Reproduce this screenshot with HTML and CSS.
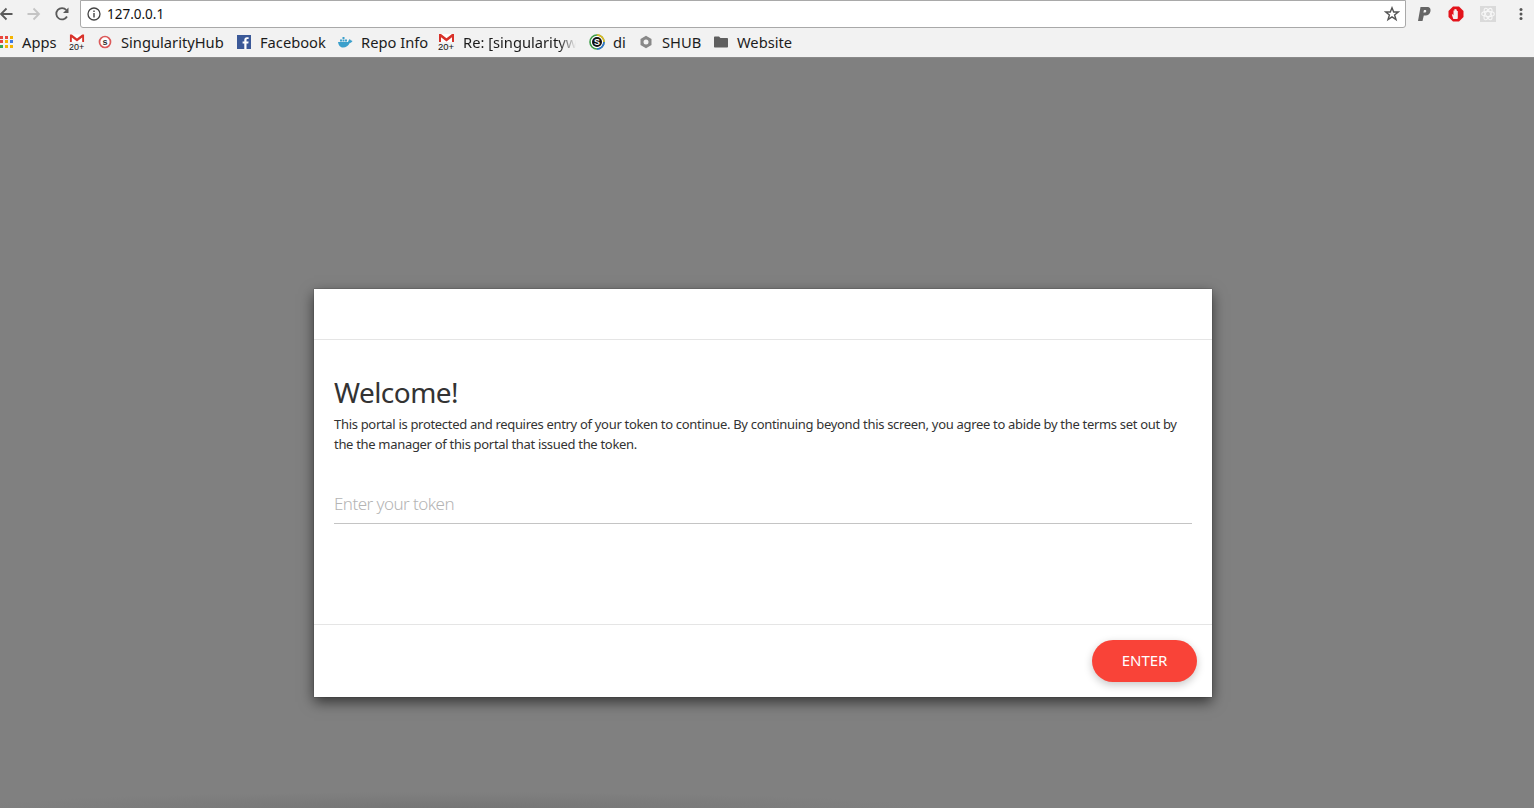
FILE: index.html
```html
<!DOCTYPE html>
<html>
<head>
<meta charset="utf-8">
<title>Welcome</title>
<link rel="stylesheet" href="styles.css">
</head>
<body>

<div class="toolbar">
    <svg class="nav-icon" width="14" height="14" viewBox="0 0 14 14"><path d="M13.500 7H2M7.500 1.500 2 7l5.500 5.500" fill="none" stroke="#5a5a5a" stroke-width="1.800"/></svg>
    <svg class="nav-icon fwd" width="14" height="14" viewBox="0 0 14 14"><path d="M.5 7H12M6.500 1.500 12 7l-5.500 5.500" fill="none" stroke="#c4c4c4" stroke-width="1.800"/></svg>
    <svg class="nav-icon reload" width="16" height="16" viewBox="0 0 16 16"><path d="M13 10.500A5.700 5.700 0 1 1 12.300 4" fill="none" stroke="#5a5a5a" stroke-width="1.800"/><path d="M14.500 1.500v5.500H9z" fill="#5a5a5a"/></svg>
    <div class="omnibox">
        <svg width="14" height="14" viewBox="0 0 14 14"><circle cx="7" cy="7" r="6" fill="none" stroke="#444" stroke-width="1.300"/><path d="M7 6v4.500M7 3.500v1.400" stroke="#444" stroke-width="1.400"/></svg>
        <span class="url">127.0.0.1</span>
        <svg class="star" width="16" height="16" viewBox="0 0 16 16"><path d="M8 1.800 9.700 6H14.300L10.600 8.900 12 13.600 8 10.900 4 13.600 5.400 8.900 1.700 6H6.300Z" fill="none" stroke="#555" stroke-width="1.400"/></svg>
    </div>
    <div class="extensions">
        <svg class="paypal" width="14" height="16" viewBox="0 0 14 16"><path d="M3.500 1H10c3 0 4 2 3.400 4.500C12.800 8 11 9.500 8.500 9.500H6.800L5.500 15H1z" fill="#666"/><path d="M7 4 6.400 6.500H8c1.400 0 1.800-2.500.3-2.500z" fill="#f2f2f2"/></svg>
        <svg width="16" height="16" viewBox="0 0 16 16"><path d="M5 .5h6L15.500 5v6L11 15.500H5L.5 11V5z" fill="#e3131b"/><path d="M5.300 13 3.800 8.500l1 -.3.7 1.300V4.500h1v3V3h1.200v4.500V3.500h1.100v4V5h1v6.500L9.500 13z" fill="#f5eeee"/></svg>
        <svg width="16" height="16" viewBox="0 0 16 16"><rect width="16" height="16" fill="#dadada"/><g fill="none" stroke="#f7f7f7" stroke-width="1.100"><ellipse cx="8" cy="8" rx="6.300" ry="2.600"/><ellipse cx="8" cy="8" rx="6.300" ry="2.600" transform="rotate(60 8 8)"/><ellipse cx="8" cy="8" rx="6.300" ry="2.600" transform="rotate(120 8 8)"/></g></svg>
        <svg class="menu" width="4" height="14" viewBox="0 0 4 14"><circle cx="2" cy="2.500" r="1.500" fill="#555"/><circle cx="2" cy="7" r="1.500" fill="#555"/><circle cx="2" cy="11.500" r="1.500" fill="#555"/></svg>
    </div>
</div>

<div class="bookmarks">
    <a class="mark">
        <span class="ico narrow">
            <svg width="13" height="13" viewBox="0 0 13 13">
                <rect x="0" y="1" width="3" height="3" fill="#e8453c"/><rect x="5" y="1" width="3" height="3" fill="#e8453c"/><rect x="10" y="1" width="3" height="3" fill="#f4b400"/>
                <rect x="0" y="5" width="3" height="3" fill="#e8453c"/><rect x="5" y="5" width="3" height="3" fill="#f4b400"/><rect x="10" y="5" width="3" height="3" fill="#3b78e7"/>
                <rect x="0" y="10" width="3" height="3" fill="#34a853"/><rect x="5" y="10" width="3" height="3" fill="#f4b400"/><rect x="10" y="10" width="3" height="3" fill="#f4b400"/>
            </svg>
        </span>
        Apps
    </a>
    <a class="mark">
        <span class="ico">
            <svg width="17" height="18" viewBox="0 0 17 18"><path d="M1 9V1h15v8z" fill="#fff"/><path d="M1 9V1h2l5.500 4.300L14 1h2v8h-2V4.300L8.500 8.500 3 4.300V9z" fill="#d8322a"/><text x="0" y="17" class="count">20+</text></svg>
        </span>
    </a>
    <a class="mark">
        <span class="ico">
            <svg width="14" height="14" viewBox="0 0 14 14"><circle cx="7" cy="7" r="5.500" fill="#fff" stroke="#dc5a5a" stroke-width="1.700"/><text x="7" y="9.700" class="letter dark">s</text></svg>
        </span>
        SingularityHub
    </a>
    <a class="mark">
        <span class="ico">
            <svg width="14" height="14" viewBox="0 0 14 14"><rect width="14" height="14" fill="#3b5998"/><path d="M9.500 14V8.500h1.800l.3-2.100H9.500V5c0-.7.200-1 1-1h1.100V2.200H10C8.200 2.200 7.300 3.300 7.300 5v1.400H5.600v2.100h1.700V14z" fill="#fff"/></svg>
        </span>
        Facebook
    </a>
    <a class="mark">
        <span class="ico wide">
            <svg width="16" height="12" viewBox="0 0 16 12"><path d="M1 6h10c.5-1.500 1-2.500 2-3 .3 1 .8 1.500 2.500 2-1 1.500-2 2-3 2.300C11.500 10 9 11.500 6 11.500 3 11.500 1.500 9 1 6z" fill="#3a9fcb"/><path d="M3 3.500h2v2H3zM5.500 3.500h2v2h-2zM8 3.500h2v2H8zM5.500 1h2v2h-2z" fill="#3a9fcb"/></svg>
        </span>
        Repo Info
    </a>
    <a class="mark">
        <span class="ico wider">
            <svg width="17" height="18" viewBox="0 0 17 18"><path d="M1 9V1h15v8z" fill="#fff"/><path d="M1 9V1h2l5.500 4.300L14 1h2v8h-2V4.300L8.500 8.500 3 4.300V9z" fill="#d8322a"/><text x="0" y="17" class="count">20+</text></svg>
        </span>
        <span class="fade">Re: [singularityw</span>
    </a>
    <a class="mark">
        <span class="ico wide">
            <svg width="16" height="16" viewBox="0 0 16 16"><circle cx="8" cy="8" r="7" fill="#fff" stroke="#3f9e4a" stroke-width="1.600"/><path d="M8 1a7 7 0 0 1 7 7" fill="none" stroke="#e3b81f" stroke-width="1.600"/><path d="M15 8a7 7 0 0 1-7 7" fill="none" stroke="#2f6fd0" stroke-width="1.600"/><circle cx="8" cy="8" r="5" fill="#111"/><text x="8" y="11.200" class="letter">S</text></svg>
        </span>
        di
    </a>
    <a class="mark">
        <span class="ico">
            <svg width="14" height="14" viewBox="0 0 14 14"><path d="M7 .8 12.500 4v6L7 13.200 1.500 10V4z" fill="#888"/><circle cx="7" cy="7" r="2.500" fill="#f2f2f2"/></svg>
        </span>
        SHUB
    </a>
    <a class="mark">
        <span class="ico">
            <svg width="14" height="12" viewBox="0 0 14 12"><path d="M0 1.500C0 .700.500.500 1 .500h4l1.500 1.500H13c.6 0 1 .4 1 1v7.500c0 .6-.4 1-1 1H1c-.6 0-1-.4-1-1z" fill="#5f5f5f"/></svg>
        </span>
        Website
    </a>
</div>

<div class="page">
    <div class="modal">
        <div class="modal-header"></div>
        <div class="modal-body">
            <h2>Welcome!</h2>
            <p>This portal is protected and requires entry of your token to continue. By continuing beyond this screen, you agree to abide by the terms set out by the the manager of this portal that issued the token.</p>
            <input class="token" type="text" placeholder="Enter your token">
        </div>
        <div class="modal-footer">
            <button class="enter">ENTER</button>
        </div>
    </div>
</div>

</body>
</html>
```

FILE: styles.css
```css
html, body {
    margin: 0;
    height: 100%;
    overflow: hidden;
}

body {
    display: flex;
    flex-direction: column;
    background-color: #808080;
    font-family: "Noto Sans", "Open Sans", sans-serif;
}

.toolbar {
    height: 28px;
    display: flex;
    align-items: center;
    background-color: #f2f2f2;
    flex-shrink: 0;
}

.nav-icon {
    flex-shrink: 0;
    margin-left: -1px;
}

.nav-icon.fwd {
    margin-left: 14px;
}

.nav-icon.reload {
    margin-left: 13px;
}

.omnibox {
    width: 1326px;
    height: 28px;
    box-sizing: border-box;
    margin-left: 10px;
    display: flex;
    align-items: center;
    padding: 0 5px 0 6px;
    background-color: #fff;
    border: 1px solid #a9a9a9;
    border-radius: 0 0 3px 3px;
}

.url {
    margin-left: 6px;
    font-size: 13.5px;
    color: #111;
    flex: 1;
}

.extensions {
    display: flex;
    align-items: center;
    margin-left: 12px;
    gap: 16px;
}

.paypal {
    margin: 0 1px 0 -1px;
}

.menu {
    margin-left: 7px;
}

.bookmarks {
    height: 29px;
    display: grid;
    grid-template-columns: 69px 29px 139px 100px 101px 151px 50px 75px auto;
    align-items: center;
    background-color: #f2f2f2;
    border-bottom: 1px solid #8a8a8a;
    flex-shrink: 0;
    font-size: 14.7px;
    color: #1c1c1c;
    white-space: nowrap;
}

.mark {
    display: flex;
    align-items: center;
    gap: 7px;
    margin-top: -2px;
}

.ico {
    width: 16px;
    display: flex;
    align-items: center;
}

.ico.narrow {
    width: 15px;
}

.ico.wide {
    width: 17px;
}

.ico.wider {
    width: 18px;
}

.count {
    font-size: 9.5px;
    font-family: "Liberation Sans", sans-serif;
    fill: #111;
}

.letter {
    font-size: 9px;
    font-weight: bold;
    font-family: "Liberation Sans", sans-serif;
    fill: #fff;
    text-anchor: middle;
}

.letter.dark {
    fill: #333;
}

.fade {
    width: 113px;
    overflow: hidden;
    -webkit-mask-image: linear-gradient(to right, #000 85%, transparent);
    mask-image: linear-gradient(to right, #000 85%, transparent);
}

.page {
    flex: 1;
    padding: 231px 0 0 314px;
    background: radial-gradient(ellipse 480px 16px at 450px 100%, #757575, transparent);
}

.modal {
    width: 898px;
    height: 408px;
    display: flex;
    flex-direction: column;
    background-color: #fff;
    box-shadow: 0 0 1px #333, 0 5px 13px rgba(0, 0, 0, 0.6);
}

.modal-header {
    height: 50px;
    border-bottom: 1px solid #e5e5e5;
}

.modal-body {
    flex: 1;
    padding: 35px 20px 0;
    color: #333;
}

.modal-body h2 {
    margin: 0 0 5px;
    font-size: 28px;
    font-weight: 400;
    line-height: 34px;
    letter-spacing: -0.55px;
}

.modal-body p {
    margin: 0;
    font-size: 13px;
    line-height: 20px;
    letter-spacing: -0.313px;
}

.token {
    display: block;
    width: 100%;
    box-sizing: border-box;
    height: 40px;
    margin-top: 30px;
    padding: 0;
    border: 0;
    border-bottom: 1px solid #c4c4c4;
    outline: none;
    font-family: inherit;
    font-size: 17px;
    font-weight: 300;
    letter-spacing: -0.55px;
}

.token::placeholder {
    color: #b4b4b4;
}

.modal-footer {
    height: 73px;
    display: flex;
    justify-content: flex-end;
    padding: 15px 15px 0 0;
    box-sizing: border-box;
    border-top: 1px solid #e5e5e5;
}

.enter {
    width: 105px;
    height: 42px;
    padding: 0 0 2px;
    border: 0;
    border-radius: 21px;
    background-color: #f94338;
    color: #fff;
    font-family: inherit;
    font-size: 15px;
    letter-spacing: -0.1px;
    box-shadow: 0 3px 8px rgba(0, 0, 0, 0.22);
}
```
